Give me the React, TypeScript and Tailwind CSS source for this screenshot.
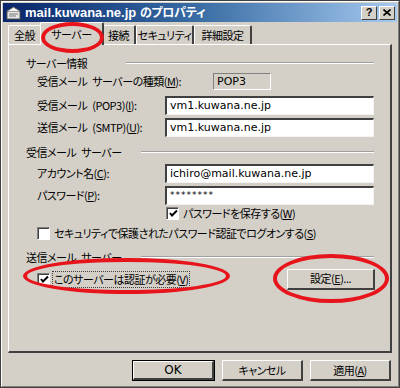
import React from 'react';

const jp = "font-['Noto_Sans_CJK_JP','Noto_Sans',sans-serif] [font-feature-settings:'palt'] text-[11px] tracking-[-0.5px] leading-none text-black";
const latin = "font-['DejaVu_Sans','Liberation_Sans',sans-serif] text-[11px] leading-none text-black";

const Sp = () => <span className="inline-block w-[5px]" />;

function GroupHeader({ label, labelW }: { label: React.ReactNode; labelW: string }) {
  return (
    <div className="flex items-center h-[16px] pl-[17px] pr-[16px]">
      <span className={`${jp} ${labelW}`}>{label}</span>
      <div className="flex-1 border-t border-t-[#a0a0a0] border-b border-b-white h-0" />
    </div>
  );
}

function Field({ label, value, mono }: { label: React.ReactNode; value: string; mono?: boolean }) {
  return (
    <div className="flex items-center h-[20px] pl-[28px]">
      <span className={`${jp} w-[128px]`}>{label}</span>
      <div className="w-[209px] h-[19px] bg-white border-t-2 border-l-2 border-t-[#404040] border-l-[#404040] border-b border-r border-b-[#f4f4f4] border-r-[#f4f4f4] flex items-center pl-[3px]">
        <span className={mono ? "font-['DejaVu_Sans',sans-serif] text-[9px] leading-none tracking-[1px]" : latin}>{value}</span>
      </div>
    </div>
  );
}

function Check({ checked }: { checked: boolean }) {
  return (
    <div className="w-[13px] h-[13px] bg-white border-t border-l border-t-[#808080] border-l-[#808080] border-b border-r border-b-white border-r-white flex items-center justify-center shrink-0">
      <div className="w-[11px] h-[11px] border-t border-l border-[#404040] border-r-0 border-b-0 flex items-center justify-center">
        {checked && (
          <svg width="9" height="9" viewBox="0 0 9 9">
            <path d="M1 4 L3 6.5 L8 1.5" stroke="#000" strokeWidth="2" fill="none" />
          </svg>
        )}
      </div>
    </div>
  );
}

function Btn({ children, def, w }: { children: React.ReactNode; def?: boolean; w: string }) {
  return (
    <div className={`${w} h-[21px] ${def ? 'border border-black' : ''}`}>
      <div className="w-full h-full bg-[#d4d0c8] border-t border-l border-t-white border-l-white border-b-2 border-r-2 border-b-[#404040] border-r-[#404040] flex items-center justify-center">
        {children}
      </div>
    </div>
  );
}

function Tab({ label, active, w }: { label: string; active?: boolean; w: string }) {
  return (
    <div
      className={`${w} ${active ? 'h-[23px] -mx-[2px] z-10 bg-[#d4d0c8] -mb-[1px]' : 'h-[19px]'} border-t border-l border-t-white border-l-white border-r-2 border-r-[#404040] rounded-tl-[2px] rounded-tr-[2px] flex items-center justify-center`}
    >
      <span className={jp}>{label}</span>
    </div>
  );
}

export default function App() {
  return (
    <div className="relative w-[400px] h-[388px] bg-[#d4d0c8] border border-[#404040] overflow-hidden">
      <div className="w-full h-full border border-white border-r-[#808080] border-b-[#808080] pt-[1px] px-[1px]">
        {/* title bar */}
        <div className="h-[19px] bg-gradient-to-r from-[#0a246a] via-[#3a6ea5] to-[#a6caf0] flex items-center pl-[3px] pr-[2px]">
          <svg width="16" height="14" viewBox="0 0 16 14" className="shrink-0">
            <rect x="1" y="5" width="13" height="8" fill="#e8e8e8" stroke="#555" />
            <path d="M1 5 L7.5 1 L14 5" fill="#f4f4f4" stroke="#555" />
            <path d="M3 8 H12 M3 10 H10" stroke="#777" />
          </svg>
          <span className="ml-[3px] font-['Liberation_Sans',sans-serif] text-[13px] font-bold text-white leading-none">
            mail.kuwana.ne.jp{' '}
            <span className="font-['Noto_Sans_CJK_JP',sans-serif] [font-feature-settings:'palt'] text-[12px] tracking-[-0.3px]">
              のプロパティ
            </span>
          </span>
          <div className="flex-1" />
          <div className="flex gap-[2px]">
            <div className="w-[16px] h-[14px] bg-[#d4d0c8] border-t border-l border-white border-b border-r border-b-[#404040] border-r-[#404040] flex items-center justify-center">
              <span className="font-['Liberation_Sans',sans-serif] text-[11px] font-bold leading-none">?</span>
            </div>
            <div className="w-[16px] h-[14px] bg-[#d4d0c8] border-t border-l border-white border-b border-r border-b-[#404040] border-r-[#404040] flex items-center justify-center">
              <svg width="8" height="7" viewBox="0 0 8 7">
                <path d="M0.5 0.5 L7.5 6.5 M7.5 0.5 L0.5 6.5" stroke="#000" strokeWidth="1.6" />
              </svg>
            </div>
          </div>
        </div>

        {/* tabs */}
        <div className="flex items-end h-[21px] mt-[1px] pl-[5px]">
          <Tab label="全般" w="w-[34px]" />
          <Tab label="サーバー" w="w-[64px]" active />
          <Tab label="接続" w="w-[34px]" />
          <Tab label="セキュリティ" w="w-[58px]" />
          <Tab label="詳細設定" w="w-[58px]" />
        </div>

        {/* panel */}
        <div className="mx-[5px] h-[309px] border-t border-l border-t-white border-l-white border-r-2 border-b-2 border-r-[#404040] border-b-[#404040] pt-[10px]">
          <GroupHeader label="サーバー情報" labelW="w-[100px]" />
          <div className="flex items-center h-[20px] pl-[28px]">
            <span className={`${jp} w-[176px]`}>
              受信メール<Sp />サーバーの種類(<u>M</u>):
            </span>
            <div className="w-[58px] h-[17px] border-t border-l border-[#808080] border-b border-r border-b-white border-r-white flex items-center pl-[3px]">
              <span className={latin}>POP3</span>
            </div>
          </div>
          <div className="h-[4px]" />
          <Field label={<>受信メール<Sp />(POP3)(<u>I</u>):</>} value="vm1.kuwana.ne.jp" />
          <div className="h-[2px]" />
          <Field label={<>送信メール<Sp />(SMTP)(<u>U</u>):</>} value="vm1.kuwana.ne.jp" />
          <div className="h-[7px]" />
          <GroupHeader label={<>受信メール<Sp />サーバー</>} labelW="w-[115px]" />
          <div className="h-[3px]" />
          <Field label={<>アカウント名(<u>C</u>):</>} value="ichiro@mail.kuwana.ne.jp" />
          <div className="h-[2px]" />
          <Field label={<>パスワード(<u>P</u>):</>} value="********" mono />
          <div className="flex items-center h-[16px] pl-[157px] gap-[4px]">
            <Check checked />
            <span className={jp}>
              パスワードを保存する(<u>W</u>)
            </span>
          </div>
          <div className="h-[4px]" />
          <div className="flex items-center h-[16px] pl-[28px] gap-[4px]">
            <Check checked={false} />
            <span className={jp}>
              セキュリティで保護されたパスワード認証でログオンする(<u>S</u>)
            </span>
          </div>
          <div className="h-[8px]" />
          <GroupHeader label={<>送信メール<Sp />サーバー</>} labelW="w-[115px]" />
          <div className="h-[1px]" />
          <div className="flex items-center h-[26px] pl-[28px] pr-[15px]">
            <Check checked />
            <span className={`${jp} ml-[3px] px-[1px] py-[2px] outline outline-1 outline-dotted outline-[#404040]`}>
              このサーバーは認証が必要(<u>V</u>)
            </span>
            <div className="flex-1" />
            <Btn w="w-[88px]">
              <span className={jp}>
                設定(<u>E</u>)...
              </span>
            </Btn>
          </div>
        </div>

        {/* bottom buttons */}
        <div className="flex justify-end gap-[7px] mt-[7px] pr-[6px]">
          <Btn w="w-[83px]" def>
            <span className={latin + ' text-[12px]'}>OK</span>
          </Btn>
          <Btn w="w-[81px]">
            <span className={jp}>キャンセル</span>
          </Btn>
          <Btn w="w-[81px]">
            <span className={jp}>
              適用(<u>A</u>)
            </span>
          </Btn>
        </div>
      </div>

      {/* red annotation ellipses */}
      <div className="absolute z-20 left-[40px] top-[21px] w-[63px] h-[31px] rounded-[50%] border-4 border-[#e8141c]" />
      <div className="absolute z-20 left-[22px] top-[257px] w-[207px] h-[36px] rounded-[50%] border-4 border-[#e8141c]" />
      <div className="absolute z-20 left-[272px] top-[253px] w-[116px] h-[49px] rounded-[50%] border-4 border-[#e8141c]" />
    </div>
  );
}
